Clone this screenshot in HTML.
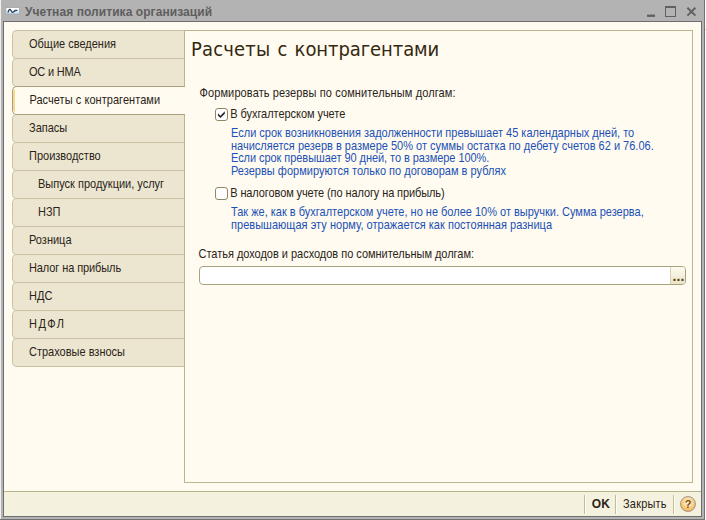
<!DOCTYPE html>
<html lang="ru">
<head>
<meta charset="utf-8">
<title>Учетная политика организаций</title>
<style>
html,body{margin:0;padding:0;}
body{width:706px;height:520px;position:relative;overflow:hidden;background:#fff;font-family:"Liberation Sans",sans-serif;font-size:11px;color:#2a2418;}
.abs{position:absolute;}
#win{left:0;top:0;width:705px;height:520px;background:#b3b3b3;}
#edgeL{left:0;top:0;width:1px;height:519px;background:#f0f0f0;}
#edgeR{left:704px;top:0;width:1px;height:520px;background:#727272;}
#edgeB{left:0;top:519px;width:705px;height:1px;background:#747474;}
#frame{left:3px;top:21px;width:699px;height:496px;background:#6e6e6e;}
#client{left:4px;top:22px;width:697px;height:494px;background:#fffbf0;}
#title{left:25px;top:4px;font-weight:bold;font-size:12px;color:#5e5e5e;white-space:nowrap;line-height:16px;letter-spacing:0.07px;}
.tab{left:12px;width:172px;height:27px;background:#ece6d0;border:1px solid #c9c1a2;border-right:none;border-radius:5px 0 0 5px;box-sizing:border-box;height:29px;line-height:27px;white-space:nowrap;}
.tab span{position:absolute;left:16px;top:0;transform:scaleY(1.09);transform-origin:0 17.3px;}
.tab.sub span{left:25px;}
.tab.sel{background:#fffbf0;border-color:#aaa17c;z-index:3;}
.tab.sel i{position:absolute;left:0px;top:2px;width:1.6px;height:23px;background:#fad891;border-radius:2px 0 0 2px;}
#panel{left:184px;top:30px;width:509px;height:453px;border:1px solid #bdb58f;box-sizing:border-box;background:#fffbf0;}
#h1{left:191px;top:38px;font-family:"DejaVu Sans","Liberation Sans",sans-serif;font-size:18px;line-height:24px;white-space:nowrap;color:#35280f;word-spacing:1.5px;transform:scaleY(1.035);transform-origin:0 5px;}
.lbl{white-space:nowrap;line-height:13px;transform:scaleY(1.09);transform-origin:0 10.3px;}
.blue{color:#1b51b6;}
.cb{width:13px;height:13px;box-sizing:border-box;border:1px solid #8f8868;border-radius:3px;background:#fff;}
#inp{left:199px;top:266px;width:487px;height:19px;box-sizing:border-box;border:1px solid #aaa27c;border-radius:4px;background:#fff;}
#inpbtn{left:670px;top:267px;width:15px;height:17px;background:linear-gradient(#fdfbf0,#f4f0dc 50%,#e9e3c6);border-left:1px solid #d9d2b4;border-radius:0 3px 3px 0;box-sizing:border-box;}
#bar{left:4px;top:491px;width:697px;height:25px;background:#f4f1de;border-top:1px solid #b9b18c;box-sizing:border-box;}
.sep{width:1px;background:#c4bc98;top:495px;height:19px;box-shadow:1px 0 0 #fffef6;}
</style>
</head>
<body>
<div id="win" class="abs"></div>
<div id="edgeL" class="abs"></div>
<div id="edgeB" class="abs"></div>
<div id="edgeR" class="abs"></div>
<div class="abs" style="left:705px;top:29px;width:1px;height:1px;background:#d9cba4"></div>
<div id="frame" class="abs"></div>
<div id="client" class="abs"></div>

<svg class="abs" style="left:5px;top:7px" width="15" height="8" viewBox="0 0 15 8">
<defs><linearGradient id="ig" x1="0" y1="0" x2="0" y2="1"><stop offset="0.45" stop-color="#ffffff"/><stop offset="1" stop-color="#b5d6f2"/></linearGradient></defs>
<rect x="0.9" y="0.5" width="13.4" height="6.6" fill="url(#ig)" stroke="#a3a3a3" stroke-width="0.8"/>
<path d="M3 5.7 C3.4 3.4 4.3 2.3 5.2 2.6 C6.3 3 6.3 5.3 7.6 5.3 C8.8 5.3 9.2 3.7 10.4 3.5 L12.5 3.4" fill="none" stroke="#27445c" stroke-width="1.35"/></svg>
<div id="title" class="abs">Учетная политика организаций</div>

<svg class="abs" style="left:644px;top:4px" width="56" height="16" viewBox="0 0 56 16">
<rect x="3" y="10.6" width="8" height="2.3" fill="#606060"/>
<rect x="21.5" y="2.5" width="10" height="10" fill="none" stroke="#606060" stroke-width="1"/><rect x="21" y="2" width="11" height="2" fill="#606060"/>
<path d="M43.4 3.7 L51.4 11.6 M51.4 3.7 L43.4 11.6" stroke="#606060" stroke-width="1.9" fill="none"/>
</svg>

<div id="panel" class="abs"></div>

<div class="abs tab" style="top:30px"><span>Общие сведения</span></div>
<div class="abs tab" style="top:58px"><span style="letter-spacing:-0.2px">ОС и НМА</span></div>
<div class="abs tab sel" style="top:86px;width:173px"><i></i><span style="left:16.4px;letter-spacing:0.05px">Расчеты с контрагентами</span></div>
<div class="abs tab" style="top:114px"><span>Запасы</span></div>
<div class="abs tab" style="top:142px"><span>Производство</span></div>
<div class="abs tab sub" style="top:170px"><span>Выпуск продукции, услуг</span></div>
<div class="abs tab sub" style="top:198px"><span>НЗП</span></div>
<div class="abs tab" style="top:226px"><span>Розница</span></div>
<div class="abs tab" style="top:254px"><span style="letter-spacing:-0.1px">Налог на прибыль</span></div>
<div class="abs tab" style="top:282px"><span>НДС</span></div>
<div class="abs tab" style="top:310px"><span style="letter-spacing:1.5px">НДФЛ</span></div>
<div class="abs tab" style="top:338px"><span>Страховые взносы</span></div>

<div id="h1" class="abs"><span style="letter-spacing:0.15px">Расчеты</span> с <span style="letter-spacing:-0.08px">контрагентами</span></div>

<div class="abs lbl" style="left:199.5px;top:87px;letter-spacing:0.115px">Формировать резервы по сомнительным долгам:</div>

<div class="abs cb" style="left:215px;top:108px"></div>
<svg class="abs" style="left:215px;top:108px" width="13" height="13" viewBox="0 0 13 13"><path d="M2.9 5.2 L5.4 7.7 L9.8 3.2 L9.8 5.8 L5.4 10.1 L2.9 7.6 Z" fill="#262626"/></svg>
<div class="abs lbl" style="left:230.2px;top:108px;letter-spacing:-0.05px">В бухгалтерском учете</div>

<div class="abs lbl blue" style="left:231px;top:127px">Если срок возникновения задолженности превышает 45 календарных дней, то</div>
<div class="abs lbl blue" style="left:231px;top:140px">начисляется резерв в размере 50% от суммы остатка по дебету счетов 62 и 76.06.</div>
<div class="abs lbl blue" style="left:231px;top:152.4px;letter-spacing:-0.06px">Если срок превышает 90 дней, то в размере 100%.</div>
<div class="abs lbl blue" style="left:231px;top:165px;letter-spacing:0.017px">Резервы формируются только по договорам в рублях</div>

<div class="abs cb" style="left:215px;top:187px"></div>
<div class="abs lbl" style="left:230.2px;top:187px;letter-spacing:-0.1px">В налоговом учете (по налогу на прибыль)</div>

<div class="abs lbl blue" style="left:231px;top:206px">Так же, как в бухгалтерском учете, но не более 10% от выручки. Сумма резерва,</div>
<div class="abs lbl blue" style="left:231px;top:219px;letter-spacing:0.03px">превышающая эту норму, отражается как постоянная разница</div>

<div class="abs lbl" style="left:198.5px;top:247.5px;letter-spacing:-0.02px">Статья доходов и расходов по сомнительным долгам:</div>
<div id="inp" class="abs"></div>
<div id="inpbtn" class="abs"></div>
<div class="abs" id="dots" style="left:672.4px;top:269px;line-height:14px;font-weight:bold;font-size:14px;letter-spacing:0.11px;color:#54400e;white-space:nowrap">...</div>

<div id="bar" class="abs"></div>
<div class="abs sep" style="left:584px"></div>
<div class="abs sep" style="left:615px"></div>
<div class="abs sep" style="left:673px"></div>
<div class="abs lbl" style="left:591.8px;top:496.8px;font-weight:bold;font-size:12px;line-height:15px;transform:none">OK</div>
<div class="abs lbl" style="left:623px;top:497.5px;letter-spacing:0.2px">Закрыть</div>
<svg class="abs" style="left:679px;top:495px" width="18" height="18" viewBox="0 0 18 18">
<defs><radialGradient id="hg" cx="0.5" cy="0.4" r="0.62"><stop offset="0" stop-color="#fdf2dc"/><stop offset="0.5" stop-color="#fad795"/><stop offset="1" stop-color="#f3a940"/></radialGradient></defs>
<circle cx="9" cy="9" r="7.5" fill="url(#hg)" stroke="#8d8a90" stroke-opacity="0.8" stroke-width="1"/>
<text x="9.2" y="13" text-anchor="middle" font-family="Liberation Sans, sans-serif" font-size="11" font-weight="bold" fill="#7a4a20">?</text>
</svg>
</body>
</html>
